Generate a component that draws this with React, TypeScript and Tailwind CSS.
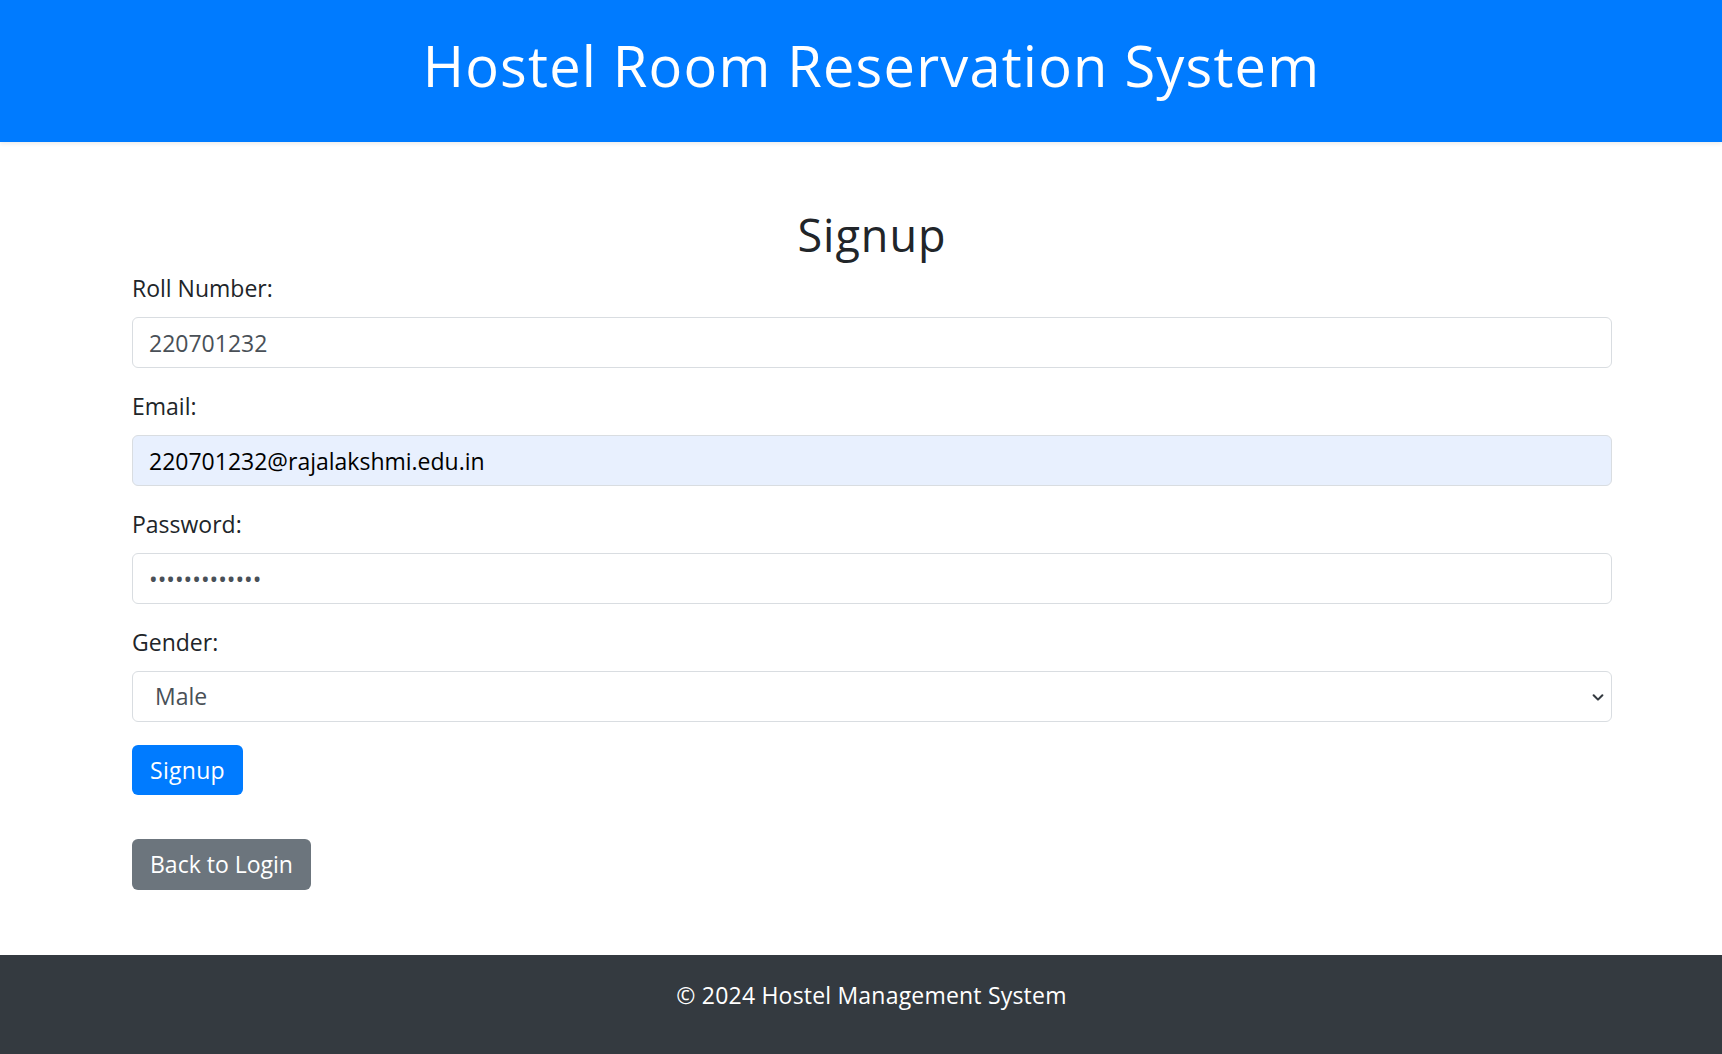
import React from 'react';

const font = { fontFamily: '"Open Sans", "Liberation Sans", sans-serif' };

function Field({ label, children }: { label: string; children: React.ReactNode }) {
  return (
    <div className="mb-[21px]">
      <label className="block text-[23px] leading-[34px] text-[#212529] mb-[12px]">{label}</label>
      {children}
    </div>
  );
}

export default function App() {
  const inputBase =
    'block w-full h-[51px] rounded-[6px] border border-[#d9dde1] pl-[16px] pr-4 text-[23px] outline-none';

  return (
    <div className="min-h-[1054px] flex flex-col bg-white" style={font}>
      {/* Header */}
      <header className="h-[142px] bg-[#007bff] pt-[31px] pl-[21px] shadow-[0_2px_4px_rgba(0,0,0,0.08)]">
        <h1 className="text-center text-white text-[56px] leading-[68px] font-normal tracking-[1.2px]">
          Hostel Room Reservation System
        </h1>
      </header>

      {/* Signup form */}
      <main className="flex-1 pl-[132px] pr-[110px] pt-[66px]">
        <h2 className="text-center text-[45px] leading-[54px] text-[#212529] mb-[9px] tracking-[1px]">Signup</h2>

        <Field label="Roll Number:">
          <input className={`${inputBase} bg-white text-[#495057]`} defaultValue="220701232" readOnly />
        </Field>

        <Field label="Email:">
          <input
            className={`${inputBase} bg-[#e8f0fe] text-black`}
            defaultValue="220701232@rajalakshmi.edu.in"
            readOnly
          />
        </Field>

        <Field label="Password:">
          <input
            type="password"
            className={`${inputBase} bg-white text-[#495057]`}
            defaultValue="rajalakshmi12"
            readOnly
          />
        </Field>

        <div className="mb-[23px]">
          <label className="block text-[23px] leading-[34px] text-[#212529] mb-[12px]">Gender:</label>
          <div className="relative">
            <select
              className="block w-full h-[51px] appearance-none rounded-[6px] border border-[#d9dde1] bg-white pl-[22px] pr-10 text-[23px] text-[#495057] outline-none"
              defaultValue="Male"
            >
              <option>Male</option>
              <option>Female</option>
            </select>
            <svg
              className="absolute right-[7px] top-1/2 -translate-y-1/2 pointer-events-none"
              width="14"
              height="14"
              viewBox="0 0 16 16"
              fill="none"
              stroke="#343a40"
              strokeWidth="2.4"
              strokeLinecap="round"
              strokeLinejoin="round"
            >
              <path d="M3 6l5 5 5-5" />
            </svg>
          </div>
        </div>

        <button className="block h-[50px] rounded-[6px] bg-[#007bff] px-[18px] text-[23px] text-white tracking-[0.3px]">
          Signup
        </button>

        <button className="block mt-[44px] h-[51px] rounded-[6px] bg-[#6c757d] px-[18px] text-[23px] text-white">
          Back to Login
        </button>
      </main>

      {/* Footer */}
      <footer className="h-[99px] bg-[#343a40] pt-[23px] pl-[21px]">
        <p className="text-center text-white text-[23px] leading-[34px] tracking-[0.2px]">© 2024 Hostel Management System</p>
      </footer>
    </div>
  );
}
